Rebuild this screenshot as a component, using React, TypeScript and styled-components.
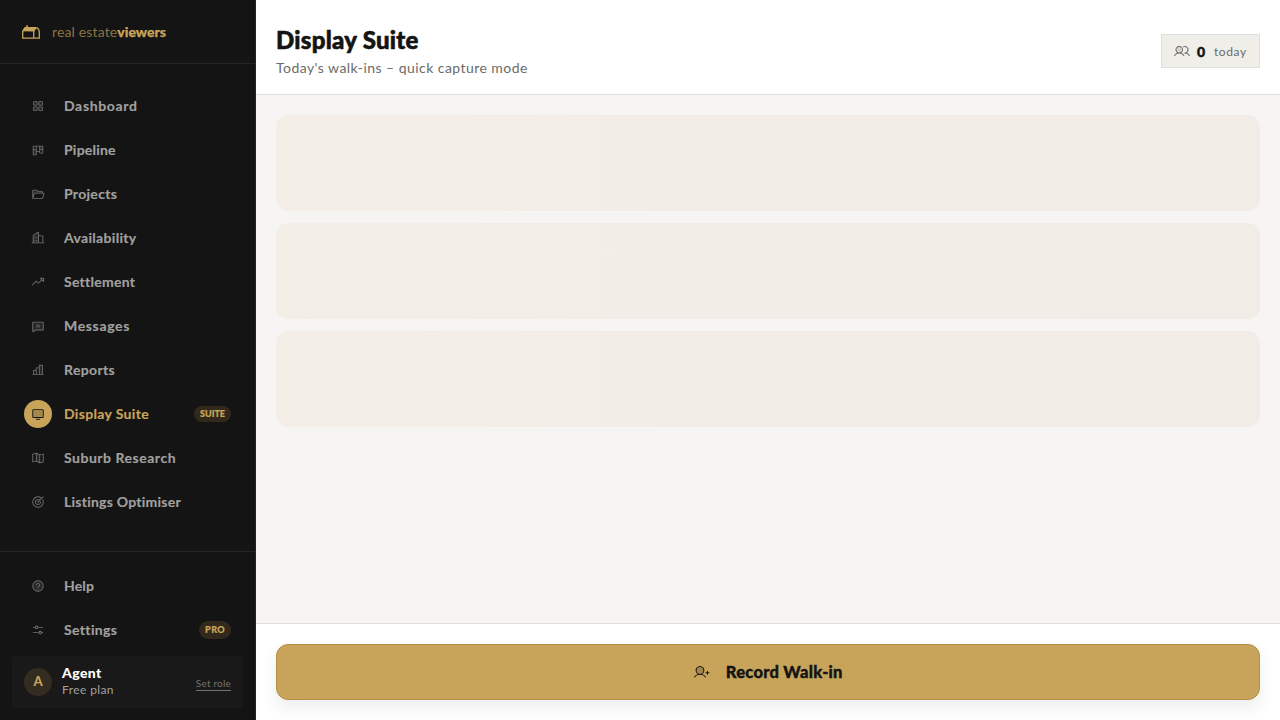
import React from "react";
import styled, { createGlobalStyle, css } from "styled-components";
import {
  PiSquaresFourDuotone,
  PiKanbanDuotone,
  PiFolderOpenDuotone,
  PiBuildingsDuotone,
  PiTrendUpDuotone,
  PiChatTextDuotone,
  PiChartBarDuotone,
  PiMonitorDuotone,
  PiMapTrifoldDuotone,
  PiTargetDuotone,
  PiQuestionDuotone,
  PiSlidersHorizontalDuotone,
  PiUsersDuotone,
  PiUserPlusDuotone,
} from "react-icons/pi";
import type { IconType } from "react-icons";

const gold = "#c8a45a";
const ink = "#141414";

const GlobalStyle = createGlobalStyle`
  * { box-sizing: border-box; }
  body { margin: 0; font-family: Lato, "Liberation Sans", sans-serif; color: ${ink}; }
  button { font: inherit; }
`;

const Shell = styled.div`
  display: flex;
  width: 100%;
  height: 100vh;
  overflow: hidden;
  background: #f6f5f3;
`;

const Sidebar = styled.aside`
  display: flex;
  flex-direction: column;
  flex: 0 0 256px;
  background: ${ink};
  border-right: 1px solid #242424;
`;

const Brand = styled.div`
  display: flex;
  align-items: center;
  gap: 11px;
  height: 64px;
  padding: 0 21px;
  border-bottom: 1px solid #262626;
`;

const BrandName = styled.span`
  font-size: 14px;
  line-height: 20px;
  color: #8c7342;
  white-space: nowrap;
  letter-spacing: 0.14px;
  strong {
    color: ${gold};
    font-weight: 900;
    letter-spacing: 0;
    -webkit-text-stroke: 0.25px ${gold};
  }
`;

const Nav = styled.nav`
  flex: 1;
  padding: 20px 12px;
`;

const SidebarFooter = styled.div`
  padding: 12px;
  border-top: 1px solid #262626;
`;

const NavItem = styled.a<{ $active?: boolean }>`
  display: flex;
  align-items: center;
  gap: 12px;
  height: 44px;
  padding: 0 12px;
  color: ${(p) => (p.$active ? gold : "#a1a1a0")};
`;

const IconDisc = styled.span<{ $active?: boolean }>`
  display: grid;
  place-items: center;
  flex: 0 0 28px;
  height: 28px;
  border-radius: 50%;
  font-size: 14px;
  color: #727272;
  ${(p) => p.$active && css`background: ${gold}; color: ${ink};`}
  svg { display: block; }
`;

const NavLabel = styled.span<{ $track: number }>`
  flex: 1;
  font-size: 14px;
  line-height: 20px;
  font-weight: 700;
  white-space: nowrap;
  letter-spacing: ${(p) => p.$track}px;
  -webkit-text-stroke: 0.15px currentColor;
`;

const Pill = styled.span<{ $tall?: boolean }>`
  display: flex;
  align-items: center;
  height: ${(p) => (p.$tall ? 18 : 16)}px;
  padding: 0 6px;
  border-radius: 9px;
  background: #32291c;
  color: ${gold};
  font-size: 9px;
  line-height: 12px;
  font-weight: 900;
  -webkit-text-stroke: 0.2px ${gold};
  letter-spacing: ${(p) => (p.$tall ? 0.4 : 0)}px;
`;

const UserCard = styled.div`
  display: flex;
  align-items: center;
  gap: 10px;
  height: 52px;
  margin-top: 4px;
  padding: 0 12px;
  border-radius: 4px;
  background: #191919;
`;

const Avatar = styled.span`
  display: grid;
  place-items: center;
  flex: 0 0 28px;
  height: 28px;
  border-radius: 50%;
  background: #352c21;
  color: ${gold};
  font-size: 13px;
  line-height: 26px;
  padding-bottom: 2px;
  font-weight: 900;
`;

const UserText = styled.div`
  flex: 1;
  display: flex;
  flex-direction: column;
`;

const UserName = styled.span`
  color: #ffffff;
  font-size: 14px;
  line-height: 16px;
  font-weight: 900;
  letter-spacing: 0.4px;
`;

const UserPlan = styled.span`
  color: #a0a09e;
  font-size: 12px;
  line-height: 18px;
  letter-spacing: 0.4px;
`;

const RoleLink = styled.a`
  margin-top: 3px;
  color: #72726f;
  font-size: 10px;
  line-height: 13px;
  letter-spacing: 0.2px;
  border-bottom: 1px solid #72726f;
`;

const Main = styled.main`
  display: flex;
  flex-direction: column;
  flex: 1;
  min-width: 0;
`;

const Header = styled.header`
  display: flex;
  align-items: center;
  justify-content: space-between;
  height: 95px;
  padding: 8px 20px 0;
  background: #ffffff;
  border-bottom: 1px solid #dfdfdd;
`;

const Title = styled.h1`
  margin: 0;
  font-size: 24px;
  line-height: 32px;
  font-weight: 900;
  letter-spacing: 0.27px;
  -webkit-text-stroke: 0.6px ${ink};
`;

const Subtitle = styled.p`
  margin: 2px 0 0;
  color: #6b6b69;
  font-size: 14px;
  line-height: 20px;
  letter-spacing: 0.45px;
`;

const Counter = styled.div`
  display: flex;
  align-items: center;
  height: 34px;
  width: 99px;
  padding: 0 12px;
  border: 1px solid #dfdfdb;
  background: #efeee9;
  color: #6b6b69;
  font-size: 12px;
  svg { display: block; font-size: 16px; }
`;

const CounterValue = styled.strong`
  margin: 0 8px 0 7px;
  color: ${ink};
  font-size: 14px;
  font-weight: 900;
  letter-spacing: 0.8px;
  -webkit-text-stroke: 0.5px ${ink};
`;

const CounterUnit = styled.span`
  letter-spacing: 0.6px;
`;

const Content = styled.section`
  display: flex;
  flex-direction: column;
  flex: 1;
  gap: 12px;
  padding: 20px;
`;

const Skeleton = styled.div`
  height: 96px;
  border-radius: 12px;
  background: linear-gradient(90deg, #f3eee6 0%, #f2ede6 50%, #f1ece6 100%);
`;

const ActionBar = styled.footer`
  height: 97px;
  padding: 20px;
  background: #ffffff;
  border-top: 1px solid #dfdfdd;
`;

const RecordButton = styled.button`
  display: flex;
  align-items: center;
  justify-content: center;
  gap: 16px;
  width: 100%;
  height: 56px;
  border: 1px solid #b58f45;
  border-radius: 12px;
  background: ${gold};
  color: ${ink};
  font-size: 16.5px;
  line-height: 24px;
  font-weight: 900;
  letter-spacing: 0.27px;
  box-shadow: 0 8px 16px rgba(20, 20, 20, 0.08);
  span { -webkit-text-stroke: 0.4px ${ink}; }
`;

function LogoMark() {
  return (
    <svg width="20" height="16" viewBox="0 0 20 16" fill="none">
      <path d="M1.7 14.2V7.3L4 3.6H14.2C17 3.6 18.3 5.8 18.3 8.8V14.2Z" stroke={gold} strokeWidth="1.3" />
      <path d="M1.7 7.3L4 3.2H14.8L12.4 7.6Z" fill={gold} />
      <path d="M12.7 14V8.7C12.7 6.7 13.6 5 15 4.4" stroke={gold} strokeWidth="1.3" />
      <path d="M5.2 4V1.2H6.8V4Z" fill={gold} />
    </svg>
  );
}

type Item = { label: string; icon: IconType; track: number; active?: boolean; badge?: string };

const primary: Item[] = [
  { label: "Dashboard", icon: PiSquaresFourDuotone, track: 0.65 },
  { label: "Pipeline", icon: PiKanbanDuotone, track: 0.22 },
  { label: "Projects", icon: PiFolderOpenDuotone, track: 0.3 },
  { label: "Availability", icon: PiBuildingsDuotone, track: 0.32 },
  { label: "Settlement", icon: PiTrendUpDuotone, track: 0.27 },
  { label: "Messages", icon: PiChatTextDuotone, track: 0.65 },
  { label: "Reports", icon: PiChartBarDuotone, track: 0.35 },
  { label: "Display Suite", icon: PiMonitorDuotone, track: 0.34, active: true, badge: "SUITE" },
  { label: "Suburb Research", icon: PiMapTrifoldDuotone, track: 0.52 },
  { label: "Listings Optimiser", icon: PiTargetDuotone, track: 0.24 },
];

const secondary: Item[] = [
  { label: "Help", icon: PiQuestionDuotone, track: 0.15 },
  { label: "Settings", icon: PiSlidersHorizontalDuotone, track: 0.35, badge: "PRO" },
];

function NavRow({ item }: { item: Item }) {
  const Icon = item.icon;
  return (
    <NavItem $active={item.active}>
      <IconDisc $active={item.active}><Icon /></IconDisc>
      <NavLabel $track={item.track}>{item.label}</NavLabel>
      {item.badge && <Pill $tall={item.badge === "PRO"}>{item.badge}</Pill>}
    </NavItem>
  );
}

export default function App() {
  return (
    <>
      <GlobalStyle />
      <Shell>
        <Sidebar>
          <Brand>
            <LogoMark />
            <BrandName>real estate<strong>viewers</strong></BrandName>
          </Brand>
          <Nav>{primary.map((item) => <NavRow key={item.label} item={item} />)}</Nav>
          <SidebarFooter>
            {secondary.map((item) => <NavRow key={item.label} item={item} />)}
            <UserCard>
              <Avatar>A</Avatar>
              <UserText>
                <UserName>Agent</UserName>
                <UserPlan>Free plan</UserPlan>
              </UserText>
              <RoleLink>Set role</RoleLink>
            </UserCard>
          </SidebarFooter>
        </Sidebar>
        <Main>
          <Header>
            <div>
              <Title>Display Suite</Title>
              <Subtitle>Today's walk-ins – quick capture mode</Subtitle>
            </div>
            <Counter>
              <PiUsersDuotone />
              <CounterValue>0</CounterValue>
              <CounterUnit>today</CounterUnit>
            </Counter>
          </Header>
          <Content>
            <Skeleton />
            <Skeleton />
            <Skeleton />
          </Content>
          <ActionBar>
            <RecordButton>
              <PiUserPlusDuotone />
              <span>Record Walk-in</span>
            </RecordButton>
          </ActionBar>
        </Main>
      </Shell>
    </>
  );
}
